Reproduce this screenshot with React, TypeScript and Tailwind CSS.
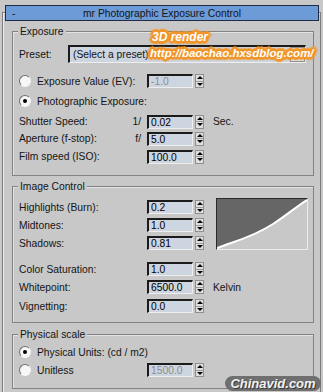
import React from "react";

const Spinner = ({ value, disabled }: { value: string; disabled?: boolean }) => {
  return (
    <div className="flex items-center gap-[2px]">
      <div
        className={`flex h-[14px] w-[46px] items-center border-t-2 border-l-2 border-b border-r border-t-[#1b1b1b] border-l-[#1b1b1b] border-b-[#eeeeee] border-r-[#eeeeee] bg-[#cdd5e1] pl-[2px] ${
          disabled ? "text-[#8d8d8d]" : "text-black"
        }`}
      >
        {value}
      </div>
      <div className="flex h-[14px] w-[9px] flex-col border border-[#8f8f8f] bg-[#dedede]">
        <div className="flex flex-1 items-center justify-center border-b border-[#9a9a9a]">
          <div className="h-0 w-0 border-x-[3px] border-b-[3px] border-x-transparent border-b-black" />
        </div>
        <div className="flex flex-1 items-center justify-center">
          <div className="h-0 w-0 border-x-[3px] border-t-[3px] border-x-transparent border-t-black" />
        </div>
      </div>
    </div>
  );
};

const Radio = ({ checked }: { checked?: boolean }) => {
  return (
    <span className="flex h-[12px] w-[12px] items-center justify-center rounded-full border border-t-[#6f6f6f] border-l-[#6f6f6f] border-b-[#f4f4f4] border-r-[#f4f4f4] bg-[#f7f7f7]">
      {checked && <span className="h-[4px] w-[4px] rounded-full bg-black" />}
    </span>
  );
};

const Field = ({
  label,
  prefix,
  value,
  unit,
  disabled,
  h = "h-[18px]",
}: {
  label: string;
  prefix?: string;
  value: string;
  unit?: string;
  disabled?: boolean;
  h?: string;
}) => {
  return (
    <div className={`flex items-center pl-[6px] ${h}`}>
      <div className="flex w-[128px] justify-between pr-[6px]">
        <span>{label}</span>
        <span>{prefix}</span>
      </div>
      <Spinner value={value} disabled={disabled} />
      {unit && <span className="ml-[9px]">{unit}</span>}
    </div>
  );
};

const Group = ({ title, children, className }: { title: string; children: React.ReactNode; className: string }) => {
  return (
    <div className={`ml-[9px] w-[302px] border border-[#828282] shadow-[inset_1px_1px_0_#e2e2e2] ${className}`}>
      <div className="-mt-[7px] ml-[5px] h-[13px] w-fit bg-[#c8c8c8] px-[2px] leading-[13px]">{title}</div>
      {children}
    </div>
  );
};

const Curve = () => {
  return (
    <div className="h-[52px] w-[92px] border-t border-l border-b border-r border-t-[#2a2a2a] border-l-[#2a2a2a] border-b-[#ececec] border-r-[#ececec] bg-[#c8c8c8]">
      <svg width="90" height="50" viewBox="0 0 90 50">
        <path d="M0,0 L90,0 L90,1 C80,7 70,16 56,25 C42,34 26,40 14,44 C8,46 4,48 0,49 Z" fill="#666666" />
        <path
          d="M0,49 C4,48 8,46 14,44 C26,40 42,34 56,25 C70,16 80,7 90,1"
          fill="none"
          stroke="#ffffff"
          strokeWidth="2"
        />
      </svg>
    </div>
  );
};

const glow =
  "[text-shadow:0_0_4px_#f2962a,1px_1px_0_#f2962a,-1px_-1px_0_#f2962a,1px_-1px_0_#f2962a,-1px_1px_0_#f2962a,2px_0_0_#f2962a,-2px_0_0_#f2962a,0_2px_0_#f2962a,0_-2px_0_#f2962a,2px_2px_1px_#f2962a,-2px_-2px_1px_#f2962a,2px_-2px_1px_#f2962a,-2px_2px_1px_#f2962a,3px_0_1px_#f2962a,-3px_0_1px_#f2962a,0_3px_1px_#f2962a,0_-3px_1px_#f2962a]";

export default function App() {
  return (
    <div className="relative h-[392px] w-[323px] overflow-hidden bg-[#c8c8c8] font-['Liberation_Sans',Arial,sans-serif] text-[10.3px] leading-[13px] text-[#141414]">
      <div className="ml-[2px] mt-[12px] h-[380px] w-[319px] border-x border-t border-[#7c7c7c] shadow-[inset_1px_1px_0_#ececec]">
        {/* rollout title */}
        <div className="-mt-[8px] ml-[2px] flex h-[16px] w-[314px] items-center border border-[#1f2c44] bg-[#6c9bd8]">
          <span className="ml-[6px] w-[10px]">-</span>
          <span className="flex-1 pr-[16px] text-center">mr Photographic Exposure Control</span>
        </div>

        <Group title="Exposure" className="mt-[10px] pb-[10px]">
          <div className="mt-[7px] flex h-[18px] items-center pl-[6px]">
            <span className="w-[49px]">Preset:</span>
            <div className="flex h-[18px] w-[238px] border-t-2 border-l-2 border-b border-r border-t-[#1b1b1b] border-l-[#1b1b1b] border-b-[#eeeeee] border-r-[#eeeeee] bg-[#cdd5e1]">
              <span className="flex-1 pl-[3px] leading-[15px]">(Select a preset)</span>
              <div className="flex w-[15px] items-center justify-center border border-[#8f8f8f] bg-[#dedede]">
                <div className="h-0 w-0 border-x-[3px] border-t-[3px] border-x-transparent border-t-black" />
              </div>
            </div>
          </div>
          <div className="mt-[9px] flex h-[18px] items-center pl-[6px]">
            <Radio />
            <span className="ml-[6px] w-[110px]">Exposure Value (EV):</span>
            <Spinner value="-1.0" disabled />
          </div>
          <div className="mt-[2px] flex h-[18px] items-center pl-[6px]">
            <Radio checked />
            <span className="ml-[6px]">Photographic Exposure:</span>
          </div>
          <div className="mt-[3px]">
            <Field label="Shutter Speed:" prefix="1/" value="0.02" unit="Sec." h="h-[17px]" />
            <Field label="Aperture (f-stop):" prefix="f/" value="5.0" h="h-[17px]" />
            <div className="mt-[1px]">
              <Field label="Film speed (ISO):" value="100.0" h="h-[17px]" />
            </div>
          </div>
        </Group>

        <Group title="Image Control" className="mt-[10px] pb-[7px]">
          <div className="mt-[5px] flex">
            <div className="flex flex-col">
              <Field label="Highlights (Burn):" value="0.2" />
              <Field label="Midtones:" value="1.0" />
              <Field label="Shadows:" value="0.81" />
            </div>
            <div className="ml-[12px]">
              <Curve />
            </div>
          </div>
          <div className="mt-[8px]">
            <Field label="Color Saturation:" value="1.0" />
            <Field label="Whitepoint:" value="6500.0" unit="Kelvin" />
            <div className="mt-[1px]">
              <Field label="Vignetting:" value="0.0" />
            </div>
          </div>
        </Group>

        <Group title="Physical scale" className="mt-[11px] pb-[9px]">
          <div className="mt-[2px] flex h-[18px] items-center pl-[6px]">
            <Radio checked />
            <span className="ml-[6px]">Physical Units: (cd / m2)</span>
          </div>
          <div className="flex h-[18px] items-center pl-[6px]">
            <Radio />
            <span className="ml-[6px] w-[110px]">Unitless</span>
            <Spinner value="1500.0" disabled />
          </div>
        </Group>
      </div>

      {/* watermarks */}
      <div
        className={`absolute left-[152px] top-[30px] text-[12px] font-bold italic leading-[14px] text-white ${glow}`}
      >
        3D render
      </div>
      <div
        className={`absolute left-[150px] top-[46px] text-[11.5px] font-bold italic leading-[15px] text-white ${glow}`}
      >
        http://baochao.hxsdblog.com/
      </div>
      <div className="absolute left-[225px] top-[376px] flex h-[15px] w-[96px] items-center justify-center rounded-full bg-[#6f6f6f] text-[13px] font-bold italic text-[#f2f2f2] [text-shadow:1px_1px_0_#3a3a3a]">
        Chinavid.com
      </div>
    </div>
  );
}
